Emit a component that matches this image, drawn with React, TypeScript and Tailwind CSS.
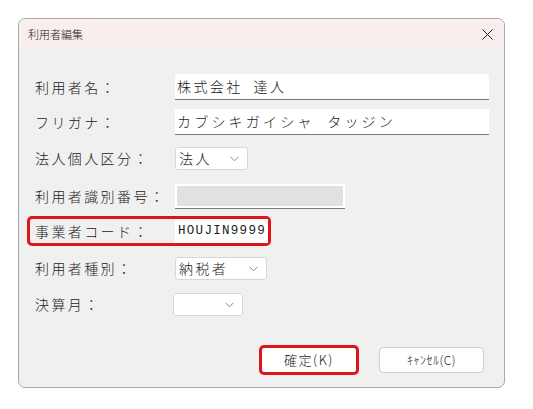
import React from "react";

const jp = { fontFamily: '"Noto Sans CJK JP", "Noto Sans", sans-serif' };

function Chevron() {
  return (
    <svg width="9" height="6" viewBox="0 0 9 6" className="shrink-0">
      <path d="M0.5 0.8 L4.5 4.8 L8.5 0.8" fill="none" stroke="#8a8a8a" strokeWidth="1" />
    </svg>
  );
}

function Label({ children }: { children: React.ReactNode }) {
  return (
    <div className="w-[140px] shrink-0 text-[14px] font-light tracking-[2.4px] text-[#1a1a1a]" style={jp}>
      {children}
    </div>
  );
}

function Select({ w, value }: { w: string; value?: string }) {
  return (
    <div
      className={`${w} h-[23px] flex items-center justify-between bg-white border border-[#d6d6d6] rounded-[3px] pl-[3px] pr-[8px] text-[14px] font-light tracking-[2.4px] text-[#1a1a1a]`}
      style={jp}
    >
      <span>{value ?? ""}</span>
      <Chevron />
    </div>
  );
}

export default function App() {
  return (
    <div className="w-[533px] h-[409px] bg-white pt-[18px] pl-[18px]">
      <div className="w-[487px] h-[370px] border border-[#a9a9a9] rounded-[7px] overflow-hidden bg-[#f0f0f0] flex flex-col">
        <div className="h-[31px] bg-[#f8eeee] flex items-center justify-between pl-[9px] pr-[11px]">
          <span className="text-[11px] font-light text-[#222]" style={jp}>利用者編集</span>
          <svg width="11" height="11" viewBox="0 0 11 11">
            <path d="M0.5 0.5 L10.5 10.5 M10.5 0.5 L0.5 10.5" stroke="#222" strokeWidth="1" />
          </svg>
        </div>
        <div className="flex flex-col pl-[16px] pt-[24px]">
          <div className="flex items-center h-[26px]">
            <Label>利用者名：</Label>
            <div className="w-[314px] h-[26px] bg-white border-b border-[#7a7a7a] flex items-center pl-[2px] text-[14px] font-light tracking-[2.4px] text-[#1a1a1a]" style={jp}>
              株式会社&nbsp;&nbsp;達人
            </div>
          </div>
          <div className="flex items-center h-[26px] mt-[9px]">
            <Label>フリガナ：</Label>
            <div className="w-[314px] h-[26px] bg-white border-b border-[#7a7a7a] flex items-center pl-[2px] text-[14px] font-light tracking-[3.2px] text-[#1a1a1a]" style={jp}>
              カブシキガイシャ&nbsp;&nbsp;タッジン
            </div>
          </div>
          <div className="flex items-center h-[23px] mt-[12px]">
            <Label>法人個人区分：</Label>
            <Select w="w-[73px]" value="法人" />
          </div>
          <div className="flex items-center h-[25px] mt-[14px]">
            <Label>利用者識別番号：</Label>
            <div className="w-[170px] h-[25px] bg-white border-b border-[#7a7a7a] p-[2px]">
              <div className="w-full h-full bg-[#e1e1e4]" />
            </div>
          </div>
          <div className="flex items-center h-[30px] mt-[7px] -ml-[8px] w-[244px] border-[3px] border-[#e0141b] rounded-[5px] pl-[5px]">
            <Label>事業者コード：</Label>
            <div className="w-[93px] h-[24px] bg-white flex items-center pl-[3px] text-[12.5px] tracking-[1.3px] text-[#1a1a1a]" style={{ fontFamily: '"Liberation Mono", monospace' }}>
              HOUJIN9999
            </div>
          </div>
          <div className="flex items-center h-[23px] mt-[11px]">
            <Label>利用者種別：</Label>
            <Select w="w-[92px]" value="納税者" />
          </div>
          <div className="flex items-center h-[23px] mt-[13px]">
            <Label>決算月：</Label>
            <div className="-ml-[2px]">
              <Select w="w-[70px]" />
            </div>
          </div>
          <div className="flex items-center justify-end h-[30px] mt-[29px] pr-[20px]">
            <div className="w-[100px] h-[30px] border-[3px] border-[#e0141b] rounded-[5px] bg-white flex items-center justify-center text-[13px] font-light tracking-[1.5px] text-[#1a1a1a]" style={jp}>
              確定(K)
            </div>
            <div className="ml-[20px] w-[105px] h-[26px] border border-[#cfcfcf] rounded-[4px] bg-white flex items-center justify-center text-[12px] font-light tracking-[0.5px] text-[#1a1a1a]" style={jp}>
              ｷｬﾝｾﾙ(C)
            </div>
          </div>
        </div>
      </div>
    </div>
  );
}
